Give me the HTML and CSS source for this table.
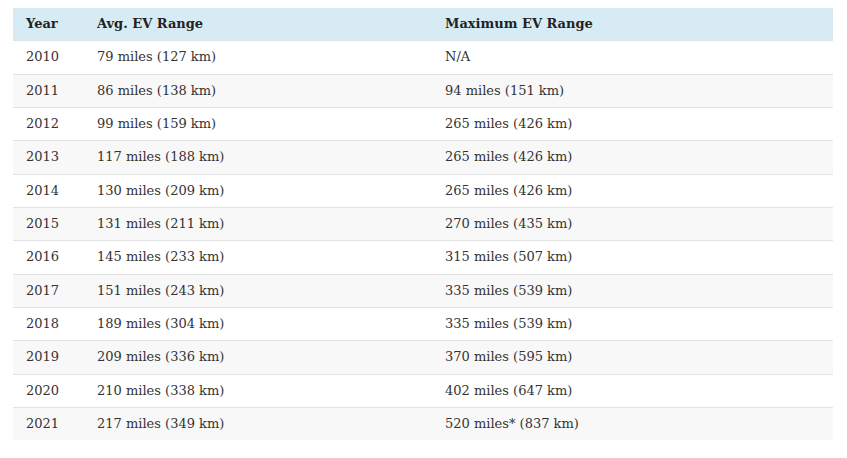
FILE: index.html
```html
<!DOCTYPE html>
<html>
<head>
<meta charset="utf-8">
<link rel="stylesheet" href="styles.css">
</head>
<body>
<table class="ev-table">
  <colgroup>
    <col class="c-year">
    <col class="c-avg">
    <col class="c-max">
  </colgroup>
  <thead>
    <tr><th>Year</th><th>Avg. EV Range</th><th>Maximum EV Range</th></tr>
  </thead>
  <tbody>
    <tr><td>2010</td><td>79 miles (127 km)</td><td>N/A</td></tr>
    <tr><td>2011</td><td>86 miles (138 km)</td><td>94 miles (151 km)</td></tr>
    <tr><td>2012</td><td>99 miles (159 km)</td><td>265 miles (426 km)</td></tr>
    <tr><td>2013</td><td>117 miles (188 km)</td><td>265 miles (426 km)</td></tr>
    <tr><td>2014</td><td>130 miles (209 km)</td><td>265 miles (426 km)</td></tr>
    <tr><td>2015</td><td>131 miles (211 km)</td><td>270 miles (435 km)</td></tr>
    <tr><td>2016</td><td>145 miles (233 km)</td><td>315 miles (507 km)</td></tr>
    <tr><td>2017</td><td>151 miles (243 km)</td><td>335 miles (539 km)</td></tr>
    <tr><td>2018</td><td>189 miles (304 km)</td><td>335 miles (539 km)</td></tr>
    <tr><td>2019</td><td>209 miles (336 km)</td><td>370 miles (595 km)</td></tr>
    <tr><td>2020</td><td>210 miles (338 km)</td><td>402 miles (647 km)</td></tr>
    <tr><td>2021</td><td>217 miles (349 km)</td><td>520 miles* (837 km)</td></tr>
  </tbody>
</table>
</body>
</html>
```
FILE: styles.css
```css
html, body {
  margin: 0;
  padding: 0;
  background: #ffffff;
}
body {
  padding: 8px 14px 0 13px;
  font-family: "DejaVu Serif", "Liberation Serif", serif;
  font-size: 13px;
  color: #333333;
}
.ev-table {
  width: 820px;
  border-collapse: collapse;
  table-layout: fixed;
}
.c-year { width: 71px; }
.c-avg { width: 348px; }
.c-max { width: 401px; }
.ev-table th,
.ev-table td {
  text-align: left;
  padding: 8px 13px;
  line-height: 16.33px;
  border-bottom: 1px solid #e2e2e2;
  white-space: nowrap;
}
.ev-table th {
  background: #d7ebf4;
  font-weight: bold;
  color: #222222;
}
.ev-table tbody tr:nth-child(even) td {
  background: #f8f8f8;
}
.ev-table tbody tr:last-child td {
  border-bottom: none;
}
```
